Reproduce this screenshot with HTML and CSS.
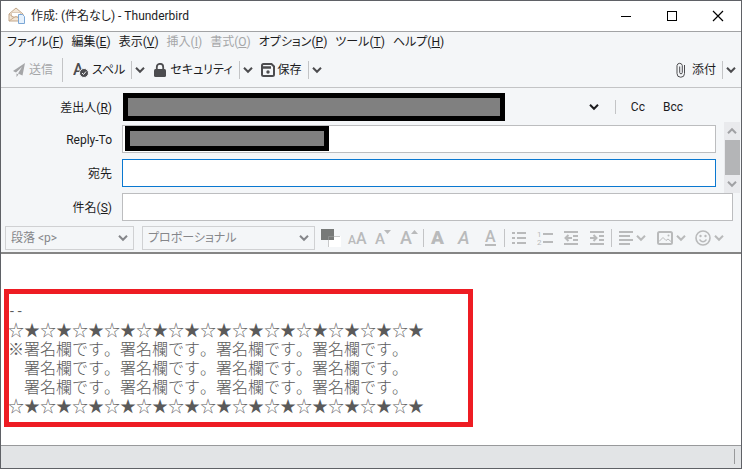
FILE: index.html
```html
<!DOCTYPE html>
<html lang="ja">
<head>
    <meta charset="UTF-8">
    <meta name="viewport" content="width=device-width, initial-scale=1.0">
    <title>作成: (件名なし) - Thunderbird</title>
    <link rel="stylesheet" href="styles.css">
</head>
<body>
    <svg class="defs" width="0" height="0" aria-hidden="true">
        <symbol id="chevron" viewBox="0 0 10 8">
            <path d="M1 1.8 L5 5.8 L9 1.8" fill="none" stroke="currentColor" stroke-width="2"/>
        </symbol>
    </svg>
    <div class="window">
        <header class="titlebar">
            <svg class="app-icon" width="18" height="18" viewBox="0 0 18 18">
                <path d="M1 7 L8 1 L15 7 V14 H1 Z" fill="#f3e6d6" stroke="#c2a78b"/>
                <path d="M3.500 5.500 H12.500 V10 H3.500 Z" fill="#fff" stroke="#dccab8"/>
                <path d="M1 7 L6 10.500 L1 14 M15 7 L10 10.500 M6 10.500 L8 9.500 L10 10.500" fill="none" stroke="#c9ac8e"/>
                <path d="M10.500 7.500 H14.500 L16.500 9.500 V16.500 H10.500 Z" fill="#e6f1fc" stroke="#7ba7d6"/>
            </svg>
            <h1>作成: (件名なし) - Thunderbird</h1>
            <div class="window-buttons">
                <button aria-label="最小化"><svg width="12" height="12"><path d="M1 6.500 H11" stroke="#000"/></svg></button>
                <button aria-label="最大化"><svg width="12" height="12"><rect x="1.500" y="1.500" width="9" height="9" fill="none" stroke="#000"/></svg></button>
                <button aria-label="閉じる"><svg width="12" height="12"><path d="M1 1 L11 11 M11 1 L1 11" stroke="#000" stroke-width="1.200"/></svg></button>
            </div>
        </header>

        <nav class="menubar">
            <button>ファイル(<u>F</u>)</button>
            <button>編集(<u>E</u>)</button>
            <button>表示(<u>V</u>)</button>
            <button disabled>挿入(<u>I</u>)</button>
            <button disabled>書式(<u>O</u>)</button>
            <button>オプション(<u>P</u>)</button>
            <button>ツール(<u>T</u>)</button>
            <button>ヘルプ(<u>H</u>)</button>
        </nav>

        <div class="toolbar">
            <button class="tool" disabled>
                <svg width="14" height="14" viewBox="0 0 14 14"><path d="M13 0 L1 8 L4 9.500 L10 4 L6 10.500 L10.500 12.500 Z M4.500 10.500 V14 L6.500 11.500 Z" fill="currentColor"/></svg>
                送信
            </button>
            <span class="divider tall"></span>
            <button class="tool">
                <svg class="icon-text" width="16" height="22" viewBox="0 -3 16 22">
                    <text x="0" y="13" font-size="16">A</text>
                    <circle cx="11" cy="11" r="4.500" fill="#4c4c4f" stroke="#f4f6f8"/>
                    <path d="M9 11 L10.500 12.500 L13 9.500" fill="none" stroke="#f4f6f8"/>
                </svg>
                スペル
            </button>
            <span class="divider"></span>
            <button class="drop" aria-label="スペルのオプション"><svg width="10" height="8"><use href="#chevron"/></svg></button>
            <button class="tool">
                <svg width="14" height="14" viewBox="0 0 14 14"><rect x="1" y="6" width="12" height="8" rx="1.500" fill="currentColor"/><path d="M3.800 7 V4 A3.200 3.200 0 0 1 10.200 4 V7" fill="none" stroke="currentColor" stroke-width="1.800"/></svg>
                セキュリティ
            </button>
            <span class="divider"></span>
            <button class="drop" aria-label="セキュリティのオプション"><svg width="10" height="8"><use href="#chevron"/></svg></button>
            <button class="tool">
                <svg width="14" height="14" viewBox="0 0 14 14"><path d="M1 2.500 Q1 1 2.500 1 H10.500 L13 3.500 V11.500 Q13 13 11.500 13 H2.500 Q1 13 1 11.500 Z" fill="none" stroke="currentColor" stroke-width="2"/><path d="M2 4.500 H10" stroke="currentColor" stroke-width="2.500"/><circle cx="7" cy="9" r="1.700" fill="currentColor"/></svg>
                保存
            </button>
            <span class="divider"></span>
            <button class="drop" aria-label="保存のオプション"><svg width="10" height="8"><use href="#chevron"/></svg></button>
            <span class="spacer"></span>
            <button class="tool attach">
                <svg width="10" height="16" viewBox="0 0 10 16"><path d="M8.500 3 V11.500 A3.700 3.700 0 0 1 1 11.500 V3.500 A2.700 2.700 0 0 1 6.300 3.500 V10.500 A1.300 1.300 0 0 1 3.700 10.500 V4.500" fill="none" stroke="currentColor"/></svg>
                添付
            </button>
            <span class="divider"></span>
            <button class="drop" aria-label="添付のオプション"><svg width="10" height="8"><use href="#chevron"/></svg></button>
        </div>

        <main class="compose">
            <div class="row from">
                <label for="from">差出人(<u>R</u>)</label>
                <div class="field">
                    <select id="from"></select>
                    <span class="mask mask-from"></span>
                    <svg class="arrow" width="10" height="8"><use href="#chevron"/></svg>
                </div>
                <div class="copy">
                    <button>Cc</button>
                    <button>Bcc</button>
                </div>
            </div>
            <div class="recipients">
                <div class="address-rows">
                    <div class="row">
                        <label for="reply">Reply-To</label>
                        <div class="field">
                            <input type="text" id="reply">
                            <span class="mask mask-reply"></span>
                        </div>
                    </div>
                    <div class="row">
                        <label for="to">宛先</label>
                        <div class="field"><input type="text" id="to" class="active"></div>
                    </div>
                </div>
                <div class="scrollbar">
                    <svg class="up" width="10" height="8"><use href="#chevron"/></svg>
                    <span class="thumb"></span>
                    <svg width="10" height="8"><use href="#chevron"/></svg>
                </div>
            </div>
            <div class="row subject">
                <label for="subject">件名(<u>S</u>)</label>
                <div class="field"><input type="text" id="subject"></div>
            </div>
        </main>

        <div class="formatbar">
            <div class="picker paragraph">
                <select aria-label="段落書式" disabled><option>段落 &lt;p&gt;</option></select>
                <svg class="arrow" width="10" height="8"><use href="#chevron"/></svg>
            </div>
            <div class="picker family">
                <select aria-label="フォント" disabled><option>プロポーショナル</option></select>
                <svg class="arrow" width="10" height="8"><use href="#chevron"/></svg>
            </div>
            <div class="format-buttons">
                <button disabled aria-label="文字色"><svg width="20" height="18"><rect x="7" y="7" width="13" height="11" fill="#fff"/><path d="M7.500 18 V7.500 H19" fill="none" stroke="#c8c9ca"/><rect width="13" height="11" fill="#777978"/><path d="M7.500 11 V7.500 H13" fill="none" stroke="#8d8f8e"/></svg></button>
                <button disabled aria-label="文字サイズ"><svg class="icon-text" width="20" height="24" viewBox="0 -3 20 24"><text x="1" y="15"><tspan font-size="12">A</tspan><tspan font-size="16">A</tspan></text></svg></button>
                <button disabled aria-label="小さく"><svg class="icon-text" width="20" height="24" viewBox="0 -3 20 24"><text x="2" y="15" font-size="15">A</text><path d="M11 1 H18 L14.500 5 Z"/></svg></button>
                <button disabled aria-label="大きく"><svg class="icon-text" width="20" height="24" viewBox="0 -3 20 24"><text x="1" y="15" font-size="18">A</text><path d="M12 5 H19 L15.500 1 Z"/></svg></button>
                <span class="divider"></span>
                <button disabled aria-label="太字"><svg class="icon-text bold" width="18" height="24" viewBox="0 -3 18 24"><text x="2" y="15" font-size="19">A</text></svg></button>
                <button disabled aria-label="斜体"><svg class="icon-text italic" width="18" height="24" viewBox="0 -3 18 24"><text x="3" y="15" font-size="18">A</text></svg></button>
                <button disabled aria-label="下線"><svg class="icon-text" width="18" height="24" viewBox="0 -3 18 24"><text x="4" y="13" font-size="16">A</text><rect x="4" y="15" width="11" height="2"/></svg></button>
                <span class="divider"></span>
                <button disabled aria-label="箇条書き"><svg width="14" height="14"><path d="M0 2 H3 M0 7 H3 M0 12 H3 M5 2 H14 M5 7 H14 M5 12 H14" stroke="currentColor" stroke-width="2"/></svg></button>
                <button disabled aria-label="番号リスト"><svg class="icon-text numbers" width="16" height="20" viewBox="0 -2 16 20"><text x="0" y="7" font-size="8">1</text><text x="0" y="15" font-size="8">2</text><path d="M6 4 H16 M6 12 H16" stroke="currentColor" stroke-width="2"/></svg></button>
                <button disabled aria-label="字下げ解除"><svg width="14" height="14"><path d="M0 1 H14 M9 5 H14 M9 9 H14 M0 13 H14 M2 7 H8 M4.500 4 L1.500 7 L4.500 10" fill="none" stroke="currentColor" stroke-width="2"/></svg></button>
                <button disabled aria-label="字下げ"><svg width="14" height="14"><path d="M0 1 H14 M9 5 H14 M9 9 H14 M0 13 H14 M0 7 H6 M3.500 4 L6.500 7 L3.500 10" fill="none" stroke="currentColor" stroke-width="2"/></svg></button>
                <span class="divider"></span>
                <button class="split" disabled aria-label="文字揃え"><svg width="14" height="14"><path d="M0 1 H14 M0 5 H11 M0 9 H14 M0 13 H11" stroke="currentColor" stroke-width="2"/></svg><svg width="10" height="8"><use href="#chevron"/></svg></button>
                <button class="split" disabled aria-label="画像"><svg width="16" height="14"><rect x="1" y="1" width="14" height="12" rx="1.500" fill="none" stroke="currentColor" stroke-width="2"/><path d="M2 10.500 L6 6.500 L9 9.500 L11 8 L14 10.500" fill="none" stroke="currentColor"/><circle cx="11.500" cy="4.500" r="1" fill="currentColor"/></svg><svg width="10" height="8"><use href="#chevron"/></svg></button>
                <button class="split" disabled aria-label="絵文字"><svg width="16" height="16"><circle cx="8" cy="8" r="7" fill="none" stroke="currentColor" stroke-width="1.600"/><circle cx="5.500" cy="6" r="1.200" fill="currentColor"/><circle cx="10.500" cy="6" r="1.200" fill="currentColor"/><path d="M4.500 9.500 Q8 14 11.500 9.500" fill="none" stroke="currentColor" stroke-width="1.300"/></svg><svg width="10" height="8"><use href="#chevron"/></svg></button>
            </div>
        </div>

        <div class="editor" contenteditable="true" role="textbox" aria-label="本文" spellcheck="false">
            <div class="signature">
                <div class="dashes">--</div>
                <div>☆★☆★☆★☆★☆★☆★☆★☆★☆★☆★☆★☆★☆★</div>
                <div>※署名欄です。署名欄です。署名欄です。署名欄です。</div>
                <div>　署名欄です。署名欄です。署名欄です。署名欄です。</div>
                <div>　署名欄です。署名欄です。署名欄です。署名欄です。</div>
                <div>☆★☆★☆★☆★☆★☆★☆★☆★☆★☆★☆★☆★☆★</div>
            </div>
            <span class="highlight"></span>
        </div>
        <footer class="statusbar"><span class="divider"></span></footer>
    </div>
</body>
</html>
```
FILE: styles.css
```css
:root {
    --chrome: #f4f6f8;
    --text: #1c1c1e;
    --icon: #4c4c4f;
    --disabled: #a5a6a8;
    --line: #c3c4c6;
}
* {
    box-sizing: border-box;
    margin: 0;
    padding: 0;
}
body {
    font: 12px/20px Roboto, "Noto Sans CJK JP", sans-serif;
    font-feature-settings: "palt";
    color: var(--text);
}
button, input, select {
    font: inherit;
    font-feature-settings: inherit;
    color: inherit;
    background: none;
    border: none;
}
svg {
    display: block;
    flex: none;
}
.defs {
    position: absolute;
}
.window {
    display: flex;
    flex-direction: column;
    min-height: 100vh;
    background: var(--chrome);
    border: 1px solid #5f6166;
}

/* title bar */
.titlebar {
    display: flex;
    align-items: center;
    height: 31px;
    padding-left: 7px;
    gap: 5px;
    background: #fff;
    border-bottom: 1px solid #a2a3a5;
}
h1 {
    flex: 1;
    font-size: 12px;
    font-weight: normal;
}
.window-buttons {
    display: flex;
}
.window-buttons button {
    display: flex;
    justify-content: center;
    width: 46px;
}

/* menus */
.menubar {
    display: flex;
    height: 20px;
    padding-left: 6px;
    gap: 8px;
}
.menubar button {
    white-space: nowrap;
}
button:disabled {
    color: var(--disabled);
}

/* main toolbar */
.toolbar {
    display: flex;
    align-items: center;
    height: 36px;
    padding: 0 5px 0 11px;
    border-bottom: 1px solid var(--line);
}
.tool {
    display: flex;
    align-items: center;
    gap: 3px;
    margin-right: 6px;
    white-space: nowrap;
}
.tool svg {
    color: var(--icon);
}
.tool:disabled svg {
    color: var(--disabled);
}
.attach {
    gap: 6px;
}
.divider {
    width: 1px;
    height: 18px;
    background: var(--line);
}
.divider.tall {
    height: 24px;
    margin: 0 10px 0 3px;
}
.drop {
    padding: 4px 0;
    margin: 0 8px 0 3px;
    color: var(--icon);
}
.drop:last-child {
    margin-right: 0;
}
.spacer {
    flex: 1;
}
.icon-text {
    font-family: Roboto, sans-serif;
    font-weight: 500;
    fill: currentColor;
}
.icon-text.bold {
    font-weight: 900;
}
.icon-text.italic {
    font-style: italic;
}
.icon-text.numbers {
    font-weight: 400;
}

/* recipients */
.compose {
    padding-top: 3px;
}
.row {
    display: flex;
    align-items: center;
    gap: 10px;
}
.row label {
    width: 111px;
    padding-top: 2px;
    text-align: right;
}
.field {
    position: relative;
    flex: 1;
}
.field input {
    display: block;
    width: 100%;
    height: 28px;
    padding: 0 6px;
    background: #fff;
    border: 1px solid #bcbdbf;
    outline: none;
}
.field input.active {
    border-color: #0a78d0;
}
.from {
    height: 31px;
}
.from select {
    display: block;
    width: 100%;
    height: 28px;
    appearance: none;
}
.arrow {
    position: absolute;
    right: 6px;
    top: 50%;
    margin-top: -4px;
    pointer-events: none;
}
.copy {
    display: flex;
    gap: 18px;
    margin-right: 58px;
    padding-left: 16px;
    background: linear-gradient(var(--line), var(--line)) no-repeat left center / 1px 14px;
}
.mask {
    position: absolute;
    background: #808080;
    border: 5px solid #000;
}
.mask-from {
    inset: 0 auto 0 1px;
    width: 382px;
}
.mask-reply {
    inset: 1px auto 2px 3px;
    width: 204px;
}
.recipients {
    display: flex;
    gap: 8px;
    padding-right: 1px;
}
.address-rows {
    display: flex;
    flex: 1;
    flex-direction: column;
    gap: 6px;
    padding: 3px 0 6px;
}
.scrollbar {
    display: flex;
    flex-direction: column;
    align-items: center;
    justify-content: space-between;
    width: 16px;
    padding: 5px 0;
    color: #a0a1a4;
    background: #e9eaed;
}
.scrollbar .up {
    transform: rotate(180deg);
}
.scrollbar .thumb {
    width: 15px;
    height: 35px;
    background: #b4b5b7;
}
.subject {
    padding-right: 8px;
}

/* formatting */
.formatbar {
    display: flex;
    align-items: center;
    height: 33px;
    padding: 3px 4px 0;
    gap: 8px;
    border-bottom: 2px solid #858585;
}
.picker {
    position: relative;
    color: #85868a;
}
.picker select {
    display: block;
    width: 100%;
    height: 24px;
    padding: 0 5px;
    appearance: none;
    border: 1px solid #d0d1d3;
    opacity: 1;
}
.paragraph {
    width: 129px;
}
.family {
    width: 173px;
}
.format-buttons {
    display: flex;
    align-items: center;
    margin-left: -5px;
}
.format-buttons button {
    display: flex;
    align-items: center;
    justify-content: center;
    width: 26px;
    height: 24px;
    color: #b9babb;
}
.format-buttons .split {
    justify-content: flex-start;
    width: 38px;
    padding-left: 6px;
    gap: 3px;
}
.format-buttons .divider {
    margin: 0 1px;
}

/* message body */
.editor {
    position: relative;
    flex: 1;
    padding: 48px 7px 0;
    font: 300 16px/19px "Liberation Sans", "Noto Sans CJK JP", sans-serif;
    font-feature-settings: "palt" 0, "kern" 0;
    font-kerning: none;
    color: #5a5a5a;
    background: #fff;
    outline: none;
}
.signature {
    white-space: nowrap;
}
.dashes {
    font-family: "Liberation Mono", monospace;
    font-size: 13px;
}
.highlight {
    position: absolute;
    top: 35px;
    left: 3px;
    width: 469px;
    height: 138px;
    border: 5px solid #ee1c23;
    pointer-events: none;
}
.statusbar {
    display: flex;
    justify-content: flex-end;
    height: 23px;
    padding: 3px 6px 0 0;
    background: #e2e4e6;
    border-top: 1px solid #98999b;
}
.statusbar .divider {
    height: 15px;
    background: #98999b;
}
```
